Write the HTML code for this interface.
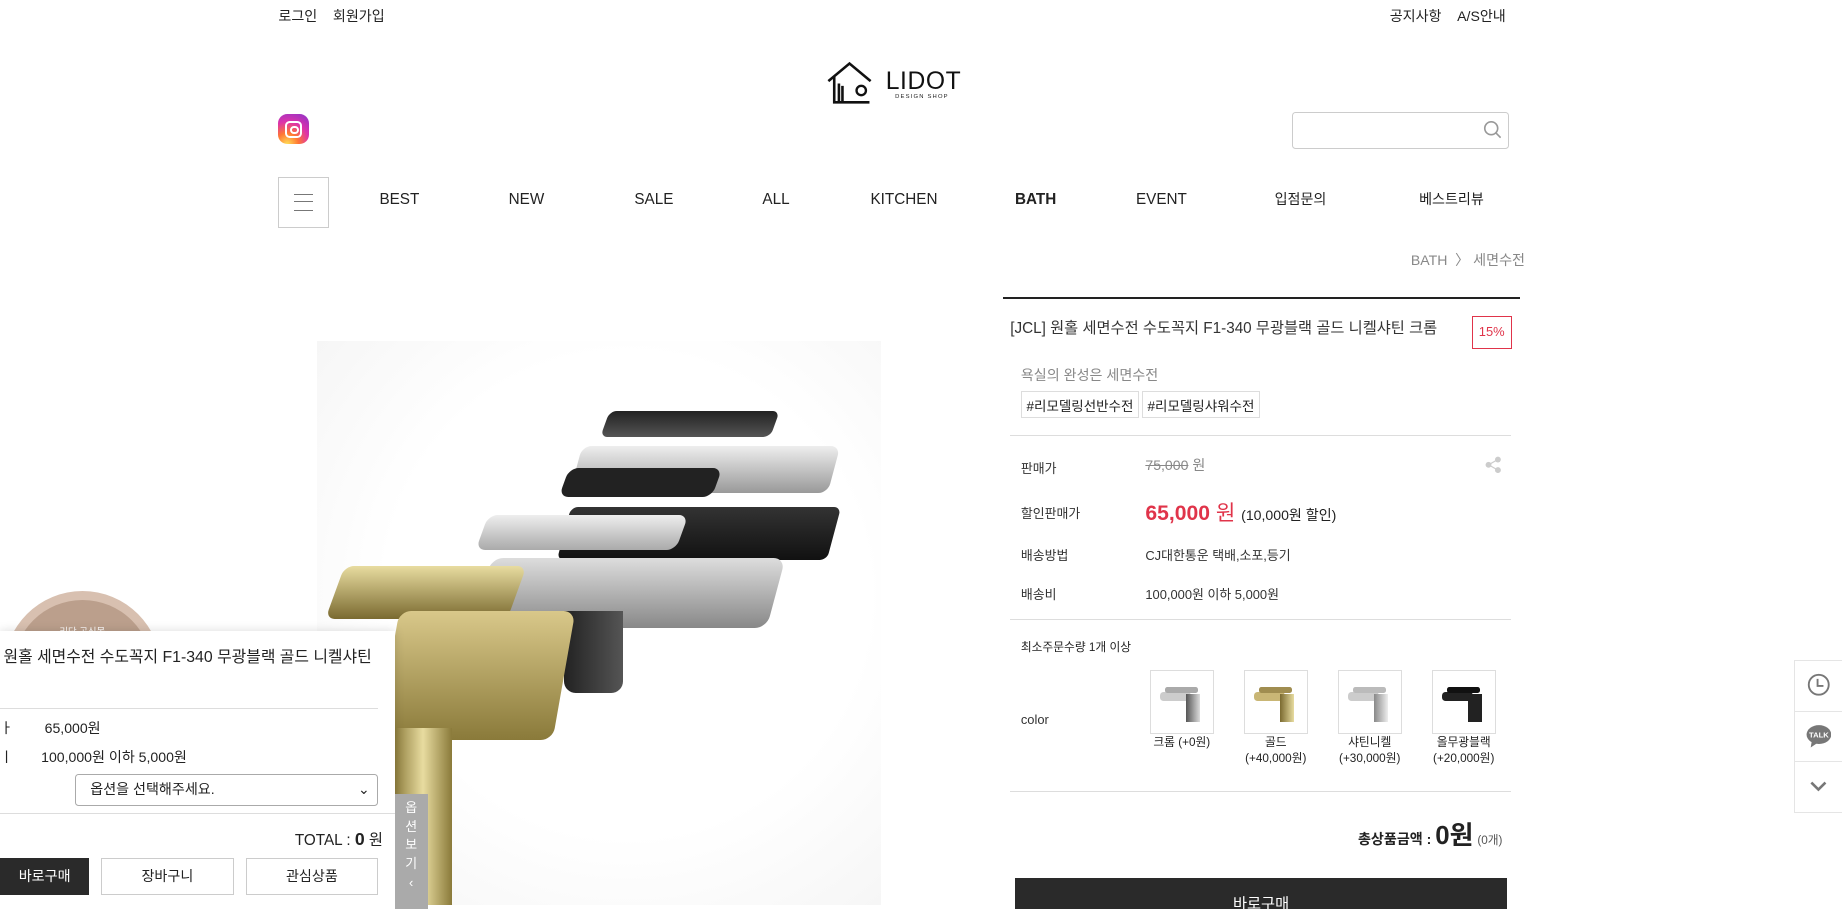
<!DOCTYPE html>
<html><head><meta charset="utf-8"><style>
html,body{margin:0;padding:0;background:#fff;overflow:hidden;width:1842px;height:909px}
#w{zoom:1.17474;position:relative;width:1568px;height:774px;font-family:"Liberation Sans","Noto Sans CJK KR",sans-serif;color:#222;font-size:12px}
.a{position:absolute;white-space:nowrap}
.nav{top:163px;font-size:13px;color:#222}
.ko{top:161px}
.lbl{font-size:11px;color:#333}
.sw{position:absolute;width:53px;height:53px;border:1px solid #ddd;background:#fff;overflow:hidden}
.sw i{position:absolute;display:block}
.cap{position:absolute;font-size:10px;text-align:center;width:80px;line-height:13px;color:#222}
</style></head><body><div id="w">
<div class="a" style="left:237px;top:5px;font-size:12px">로그인 &nbsp;&nbsp; 회원가입</div>
<div class="a" style="left:1183px;top:5px;font-size:12px">공지사항 &nbsp;&nbsp; A/S안내</div>
<svg class="a" style="left:703px;top:51px" width="44" height="38" viewBox="0 0 44 38"><path d="M2 18 L20 3 L38 18 M7 14 V36 H37 M11 36 V20 M14 36 V22" fill="none" stroke="#111" stroke-width="2.2"/><circle cx="30" cy="26" r="4" fill="none" stroke="#111" stroke-width="2"/></svg>
<div class="a" style="left:754px;top:58px;font-size:21px;letter-spacing:0.5px;color:#111">LIDOT</div>
<div class="a" style="left:762px;top:80px;font-size:5px;letter-spacing:1px">DESIGN SHOP</div>
<div class="a" style="left:237px;top:97px;width:26px;height:26px;border-radius:8px;background:radial-gradient(circle at 30% 100%,#fd5 0%,#f73 30%,#d3a 60%,#83c 100%)"><div style="position:absolute;left:6px;top:6px;width:11px;height:11px;border:2px solid #fff;border-radius:4px"></div><div style="position:absolute;left:10px;top:10px;width:4px;height:4px;border:2px solid #fff;border-radius:50%"></div></div>
<div class="a" style="left:1100px;top:95px;width:183px;height:30px;border:1px solid #ccc;border-radius:3px"></div>
<svg class="a" style="left:1262px;top:102px" width="16" height="16"><circle cx="7" cy="7" r="5.5" fill="none" stroke="#999" stroke-width="1.4"/><path d="M11 11 L15 15" stroke="#999" stroke-width="1.4"/></svg>
<div class="a" style="left:237px;top:151px;width:41px;height:41px;border:1px solid #ccc"><div style="position:absolute;left:12px;top:13px;width:17px;height:13px;border-top:1.5px solid #777;border-bottom:1.5px solid #777"></div><div style="position:absolute;left:12px;top:19px;width:17px;border-top:1.5px solid #777"></div></div>
<div class="a nav" style="left:323px">BEST</div>
<div class="a nav" style="left:433px">NEW</div>
<div class="a nav" style="left:540px">SALE</div>
<div class="a nav" style="left:649px">ALL</div>
<div class="a nav" style="left:741px">KITCHEN</div>
<div class="a nav" style="left:864px;font-weight:bold">BATH</div>
<div class="a nav" style="left:967px">EVENT</div>
<div class="a nav ko" style="left:1085px;font-size:12px">입점문의</div>
<div class="a nav ko" style="left:1208px;font-size:12px">베스트리뷰</div>
<div class="a" style="left:1201px;top:213px;font-size:12px;color:#888">BATH &nbsp;〉 세면수전</div>
<!-- faucet image -->
<div class="a" style="left:270px;top:290px;width:480px;height:480px;background:radial-gradient(ellipse at 55% 45%,#fff 55%,#f4f4f4 100%)"></div>
<div class="a" style="left:515px;top:350px;width:145px;height:22px;background:linear-gradient(#222,#555);border-radius:6px;transform:skew(-20deg)"></div>
<div class="a" style="left:490px;top:380px;width:220px;height:40px;background:linear-gradient(#eee,#999);border-radius:8px;transform:skew(-15deg)"></div>
<div class="a" style="left:480px;top:398px;width:130px;height:25px;background:#222;border-radius:8px;transform:skew(-20deg)"></div>
<div class="a" style="left:480px;top:432px;width:230px;height:45px;background:linear-gradient(#333,#111);border-radius:6px;transform:skew(-15deg)"></div>
<div class="a" style="left:410px;top:438px;width:170px;height:30px;background:linear-gradient(#eee,#aaa);border-radius:8px;transform:skew(-20deg)"></div>
<div class="a" style="left:410px;top:475px;width:250px;height:60px;background:linear-gradient(#ddd,#888);border-radius:10px;transform:skew(-15deg)"></div>
<div class="a" style="left:480px;top:520px;width:50px;height:70px;background:linear-gradient(90deg,#222,#555);border-radius:0 0 10px 10px"></div>
<div class="a" style="left:285px;top:482px;width:155px;height:45px;background:linear-gradient(#e8dca0,#7a6a30);border-radius:8px;transform:skew(-20deg)"></div>
<div class="a" style="left:330px;top:520px;width:150px;height:110px;background:linear-gradient(#d9c88a,#8a7a3a);border-radius:10px;transform:skew(-10deg)"></div>
<div class="a" style="left:335px;top:620px;width:50px;height:150px;background:linear-gradient(90deg,#8a7a3a,#e8dca0,#8a7a3a)"></div>
<!-- left circle -->
<div class="a" style="left:3px;top:503px;width:134px;height:134px;border-radius:50%;background:#d8c0b0"><div style="position:absolute;left:8px;top:8px;right:8px;bottom:8px;border-radius:50%;background:#bb9f8c"></div><div style="position:absolute;left:0;right:0;top:28px;text-align:center;color:#fff;font-size:8px">리닷 공식몰</div></div>
<!-- left floating panel -->
<div class="a" style="left:0;top:537px;width:336px;height:237px;background:#fff;box-shadow:0 0 8px rgba(0,0,0,.15)"></div>
<div class="a" style="left:3px;top:548px;font-size:13.5px;color:#222">원홀 세면수전 수도꼭지 F1-340 무광블랙 골드 니켈샤틴</div>
<div class="a" style="left:0;top:603px;width:322px;border-top:1px solid #ddd"></div>
<div class="a" style="left:0;top:611px;font-size:12px">ㅏ</div>
<div class="a" style="left:38px;top:611px;font-size:12px">65,000원</div>
<div class="a" style="left:0;top:636px;font-size:12px">ㅣ</div>
<div class="a" style="left:35px;top:636px;font-size:12px">100,000원 이하 5,000원</div>
<div class="a" style="left:64px;top:659px;width:256px;height:25px;border:1px solid #aaa;border-radius:3px;font-size:12px;line-height:25px;text-indent:12px">옵션을 선택해주세요.<span style="position:absolute;right:6px;top:0">⌄</span></div>
<div class="a" style="left:0;top:692px;width:336px;border-top:1px solid #ddd"></div>
<div class="a" style="left:251px;top:705px;font-size:13px">TOTAL : <b style="font-size:15px">0</b> 원</div>
<div class="a" style="left:0;top:730px;width:76px;height:32px;background:#2a2a2a;color:#fff;font-size:12px;line-height:32px;text-align:center">바로구매</div>
<div class="a" style="left:86px;top:730px;width:113px;height:32px;border:1px solid #ccc;box-sizing:border-box;font-size:12px;line-height:30px;text-align:center">장바구니</div>
<div class="a" style="left:209px;top:730px;width:113px;height:32px;border:1px solid #ccc;box-sizing:border-box;font-size:12px;line-height:30px;text-align:center">관심상품</div>
<div class="a" style="left:336px;top:676px;width:28px;height:98px;background:#aaa;color:#fff;font-size:11px;text-align:center;line-height:16px;white-space:normal;padding-top:4px;box-sizing:border-box">옵<br>션<br>보<br>기<br>‹</div>
<!-- right detail -->
<div class="a" style="left:854px;top:253px;width:440px;border-top:2px solid #222"></div>
<div class="a" style="left:860px;top:269px;font-size:13px;color:#333">[JCL] 원홀 세면수전 수도꼭지 F1-340 무광블랙 골드 니켈샤틴 크롬</div>
<div class="a" style="left:1253px;top:269px;width:32px;height:26px;border:1px solid #e0344a;color:#e0344a;font-size:11px;line-height:26px;text-align:center">15%</div>
<div class="a" style="left:869px;top:311px;font-size:12px;color:#888">욕실의 완성은 세면수전</div>
<div class="a" style="left:869px;top:333px;border:1px solid #ddd;padding:2px 4px;font-size:11.5px">#리모델링선반수전</div>
<div class="a" style="left:972px;top:333px;border:1px solid #ddd;padding:2px 4px;font-size:11.5px">#리모델링샤워수전</div>
<div class="a" style="left:860px;top:370px;width:426px;border-top:1px solid #ddd"></div>
<div class="a lbl" style="left:869px;top:390px">판매가</div>
<div class="a" style="left:975px;top:387px;font-size:12px;color:#888"><s>75,000</s> 원</div>
<svg class="a" style="left:1264px;top:388px" width="14" height="15"><circle cx="11" cy="3" r="2.5" fill="#ccc"/><circle cx="3" cy="7.5" r="2.5" fill="#ccc"/><circle cx="11" cy="12" r="2.5" fill="#ccc"/><path d="M11 3 L3 7.5 L11 12" stroke="#ccc" fill="none"/></svg>
<div class="a lbl" style="left:869px;top:428px">할인판매가</div>
<div class="a" style="left:975px;top:422px;font-size:18px;color:#e0344a;font-weight:bold">65,000 <span style="font-weight:normal">원</span> <span style="font-size:12px;color:#222;font-weight:normal">(10,000원 할인)</span></div>
<div class="a lbl" style="left:869px;top:464px">배송방법</div>
<div class="a lbl" style="left:975px;top:464px">CJ대한통운 택배,소포,등기</div>
<div class="a lbl" style="left:869px;top:497px">배송비</div>
<div class="a lbl" style="left:975px;top:497px">100,000원 이하 5,000원</div>
<div class="a" style="left:860px;top:527px;width:426px;border-top:1px solid #ddd"></div>
<div class="a" style="left:869px;top:543px;font-size:10px">최소주문수량 1개 이상</div>
<div class="a lbl" style="left:869px;top:606px">color</div>
<div class="sw" style="left:979px;top:570px"><i style="left:8px;top:18px;width:26px;height:8px;background:#ccc;border-radius:3px"></i><i style="left:12px;top:14px;width:28px;height:5px;background:#aaa;border-radius:2px"></i><i style="left:30px;top:20px;width:12px;height:24px;background:linear-gradient(90deg,#555,#ddd)"></i></div>
<div class="sw" style="left:1059px;top:570px"><i style="left:8px;top:18px;width:26px;height:8px;background:#c9b675;border-radius:3px"></i><i style="left:12px;top:14px;width:28px;height:5px;background:#a08d50;border-radius:2px"></i><i style="left:30px;top:20px;width:12px;height:24px;background:linear-gradient(90deg,#7a6a30,#e8dca0)"></i></div>
<div class="sw" style="left:1139px;top:570px"><i style="left:8px;top:18px;width:26px;height:8px;background:#ccc;border-radius:3px"></i><i style="left:12px;top:14px;width:28px;height:5px;background:#bbb;border-radius:2px"></i><i style="left:30px;top:20px;width:12px;height:24px;background:linear-gradient(90deg,#888,#eee)"></i></div>
<div class="sw" style="left:1219px;top:570px"><i style="left:8px;top:18px;width:26px;height:8px;background:#222;border-radius:3px"></i><i style="left:12px;top:14px;width:28px;height:5px;background:#111;border-radius:2px"></i><i style="left:30px;top:20px;width:12px;height:24px;background:#222"></i></div>
<div class="cap" style="left:966px;top:626px">크롬 (+0원)</div>
<div class="cap" style="left:1046px;top:626px">골드<br>(+40,000원)</div>
<div class="cap" style="left:1126px;top:626px">샤틴니켈<br>(+30,000원)</div>
<div class="cap" style="left:1206px;top:626px">올무광블랙<br>(+20,000원)</div>
<div class="a" style="left:860px;top:673px;width:426px;border-top:1px solid #ddd"></div>
<div class="a" style="left:1156px;top:694px;font-size:12px;font-weight:bold">총상품금액 : <span style="font-size:22px">0원</span> <span style="font-size:10px;font-weight:normal;color:#555">(0개)</span></div>
<div class="a" style="left:864px;top:747px;width:419px;height:40px;background:#2a2a2a;color:#fff;font-size:13px;text-align:center;line-height:46px">바로구매</div>
<div class="a" style="left:1527px;top:562px;width:41px;height:128px;border:1px solid #e5e5e5;border-right:0;background:#fff"></div>
<div class="a" style="left:1527px;top:605px;width:41px;border-top:1px solid #e5e5e5"></div>
<div class="a" style="left:1527px;top:648px;width:41px;border-top:1px solid #e5e5e5"></div>
<svg class="a" style="left:1538px;top:573px" width="20" height="20"><circle cx="10" cy="10" r="8.5" fill="none" stroke="#777" stroke-width="1.6"/><path d="M9 5 V11 H14" fill="none" stroke="#777" stroke-width="1.6"/></svg>
<svg class="a" style="left:1537px;top:616px" width="22" height="22"><ellipse cx="11" cy="9" rx="10.5" ry="8" fill="#777"/><path d="M5 14 L4 20 L10 16Z" fill="#777"/><text x="11" y="11.5" font-size="6.5" fill="#fff" text-anchor="middle" font-family="Liberation Sans" font-weight="bold">TALK</text></svg>
<svg class="a" style="left:1540px;top:663px" width="16" height="12"><path d="M2 3 L8 9 L14 3" fill="none" stroke="#777" stroke-width="2.2"/></svg>
</div></body></html>
